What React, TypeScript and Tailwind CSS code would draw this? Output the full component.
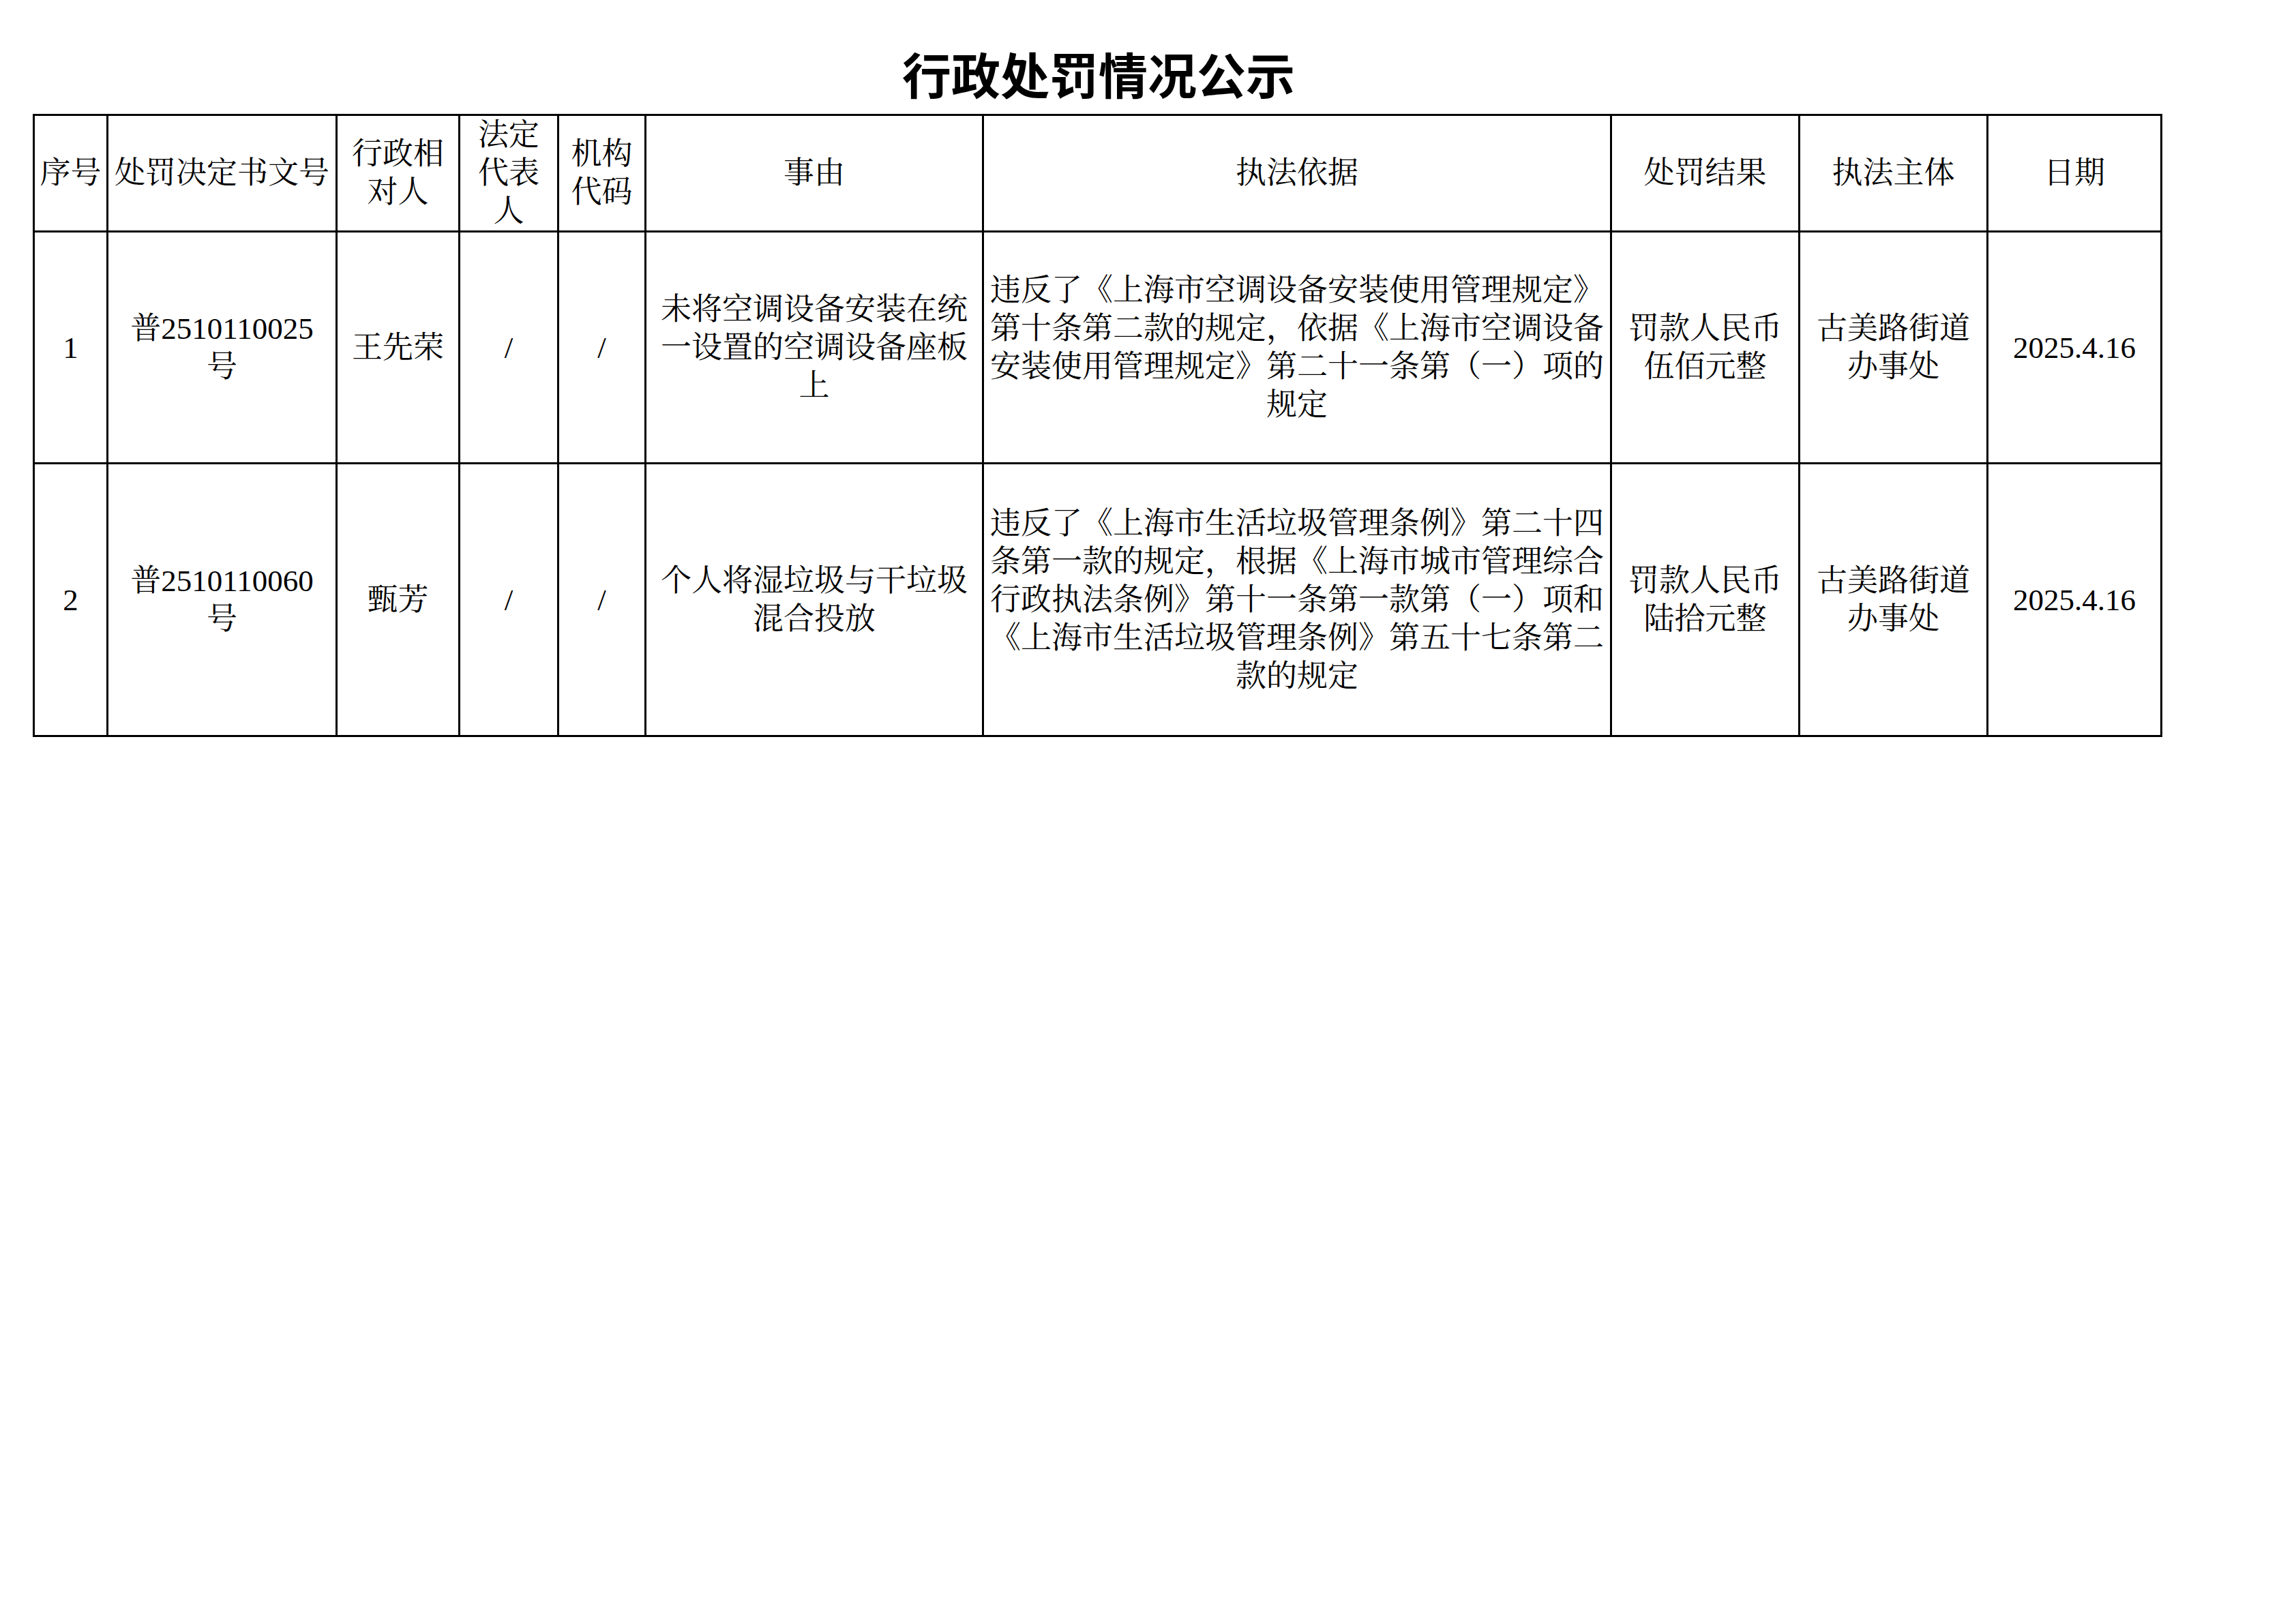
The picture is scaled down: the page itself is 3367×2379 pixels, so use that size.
import React from "react";

type Cell = string[];

const colWidths = [108, 336, 180, 145, 128, 495, 921, 276, 276, 255];

const colClass = [
  "w-[108px]",
  "w-[336px]",
  "w-[180px]",
  "w-[145px]",
  "w-[128px]",
  "w-[495px]",
  "w-[921px]",
  "w-[276px]",
  "w-[276px]",
  "w-[255px]",
];

const header: Cell[] = [
  ["序号"],
  ["处罚决定书文号"],
  ["行政相", "对人"],
  ["法定", "代表", "人"],
  ["机构", "代码"],
  ["事由"],
  ["执法依据"],
  ["处罚结果"],
  ["执法主体"],
  ["日期"],
];

const rows: { height: string; cells: Cell[] }[] = [
  {
    height: "h-[340px]",
    cells: [
      ["1"],
      ["普2510110025", "号"],
      ["王先荣"],
      ["/"],
      ["/"],
      ["未将空调设备安装在统", "一设置的空调设备座板", "上"],
      [
        "违反了《上海市空调设备安装使用管理规定》",
        "第十条第二款的规定，依据《上海市空调设备",
        "安装使用管理规定》第二十一条第（一）项的",
        "规定",
      ],
      ["罚款人民币", "伍佰元整"],
      ["古美路街道", "办事处"],
      ["2025.4.16"],
    ],
  },
  {
    height: "h-[400px]",
    cells: [
      ["2"],
      ["普2510110060", "号"],
      ["甄芳"],
      ["/"],
      ["/"],
      ["个人将湿垃圾与干垃圾", "混合投放"],
      [
        "违反了《上海市生活垃圾管理条例》第二十四",
        "条第一款的规定，根据《上海市城市管理综合",
        "行政执法条例》第十一条第一款第（一）项和",
        "《上海市生活垃圾管理条例》第五十七条第二",
        "款的规定",
      ],
      ["罚款人民币", "陆拾元整"],
      ["古美路街道", "办事处"],
      ["2025.4.16"],
    ],
  },
];

function Lines({ lines }: { lines: Cell }) {
  return (
    <>
      {lines.map((l, i) => (
        <div key={i} className="whitespace-nowrap">
          {l}
        </div>
      ))}
    </>
  );
}

const cellBase =
  "border-[3px] border-black text-center align-middle px-[4px] py-0 text-[45px] leading-[56px] text-black overflow-hidden";

export default function App() {
  const tableWidth = colWidths.reduce((a, b) => a + b, 0);

  return (
    <div className="min-h-screen bg-white pl-[48px] pt-[71px] [font-family:'Liberation_Serif','Noto_Serif_CJK_SC','Noto_Sans_CJK_SC',serif]">
      {/* Title */}
      <div
        className="mb-[24px] text-center text-[72px] leading-[72px] font-bold text-black [font-family:'Noto_Sans_CJK_SC',sans-serif]"
        style={{ width: tableWidth + 6 }}
      >
        行政处罚情况公示
      </div>

      {/* Table */}
      <table
        className="table-fixed border-collapse border-[3px] border-black"
        style={{ width: tableWidth }}
      >
        <colgroup>
          {colClass.map((c, i) => (
            <col key={i} className={c} />
          ))}
        </colgroup>
        <thead>
          <tr className="h-[166px]">
            {header.map((h, i) => (
              <th
                key={i}
                className={`${cellBase} font-normal ${i === 3 ? "leading-[54px]" : ""}`}
              >
                <Lines lines={h} />
              </th>
            ))}
          </tr>
        </thead>
        <tbody>
          {rows.map((r, ri) => (
            <tr key={ri} className={r.height}>
              {r.cells.map((c, ci) => (
                <td key={ci} className={cellBase}>
                  <Lines lines={c} />
                </td>
              ))}
            </tr>
          ))}
        </tbody>
      </table>
    </div>
  );
}
